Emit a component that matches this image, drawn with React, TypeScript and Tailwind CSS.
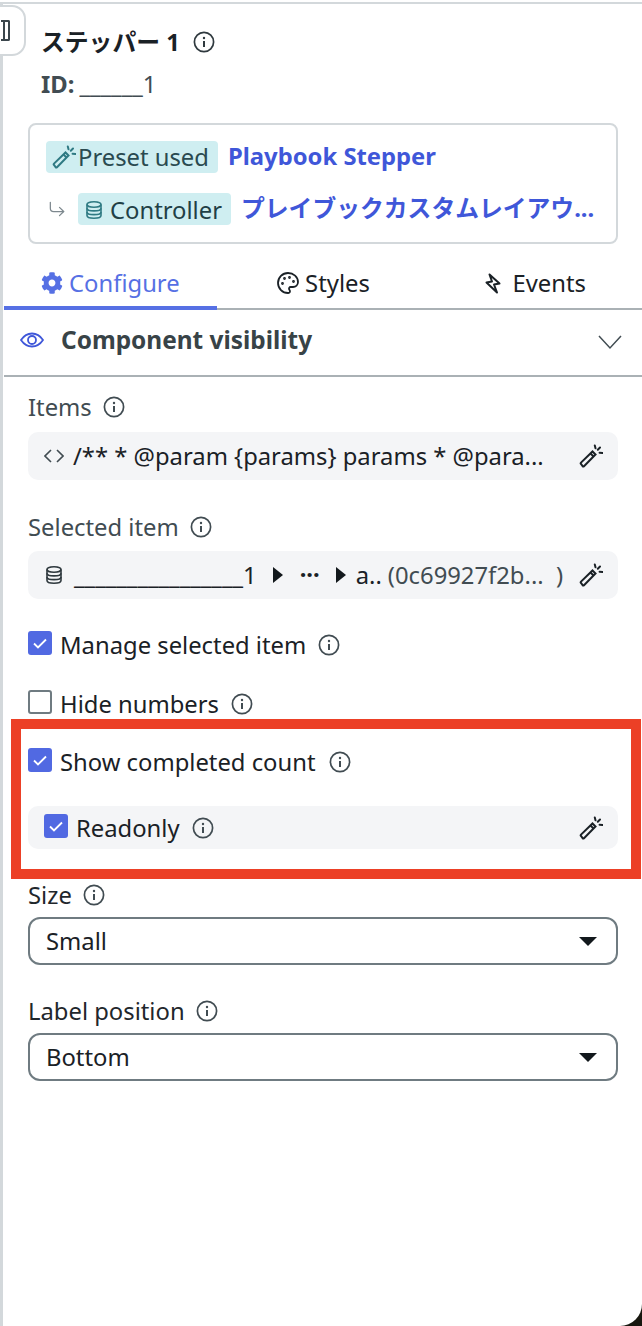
import React from "react";
import { CornerDownRight, Palette } from "lucide-react";
import { FaCog } from "react-icons/fa";

const Info = ({ className = "" }: { className?: string }) => (
  <svg viewBox="0 0 22 22" className={`h-[22px] w-[22px] shrink-0 ${className}`} fill="none" stroke="currentColor">
    <circle cx="11" cy="11" r="9.6" strokeWidth="1.7" />
    <circle cx="11" cy="7" r="1.2" fill="currentColor" stroke="none" />
    <path d="M11 10v6" strokeWidth="2" />
  </svg>
);

const Wand = ({ className = "" }: { className?: string }) => (
  <svg viewBox="0 0 24 24" className={`h-6 w-6 shrink-0 ${className}`} fill="none" stroke="currentColor" strokeWidth="2">
    <path d="M2 18.600 13.500 7.500l3 3L5 22.200a1 1 0 0 1-1.400 0L2 20a1 1 0 0 1 0-1.400Z" />
    <path d="M11.500 9.500l3 3" />
    <path d="M15.800 1.500l.7 2.800M21 3.500l-2.200 2.200M23.500 9l-2.900-.3" strokeLinecap="round" />
  </svg>
);

const Db = ({ className = "" }: { className?: string }) => (
  <svg viewBox="0 0 16 18" className={`h-[18px] w-4 shrink-0 ${className}`} fill="none" stroke="currentColor" strokeWidth="1.600">
    <ellipse cx="8" cy="3.500" rx="7" ry="2.700" />
    <path d="M1 3.500v11c0 1.500 3.100 2.700 7 2.700s7-1.200 7-2.700v-11" />
    <path d="M1 7.200c0 1.500 3.100 2.700 7 2.700s7-1.200 7-2.700M1 10.900c0 1.500 3.100 2.700 7 2.700s7-1.200 7-2.700" />
  </svg>
);

const Check = ({ checked, className = "" }: { checked: boolean; className?: string }) =>
  checked ? (
    <span className={`flex h-6 w-6 shrink-0 items-center justify-center rounded-[3px] bg-[#5169e2] ${className}`}>
      <svg viewBox="0 0 24 24" className="h-6 w-6" fill="none" stroke="#fff" strokeWidth="1.8">
        <path d="M6 12.500l4 4 8-8" />
      </svg>
    </span>
  ) : (
    <span className={`h-6 w-6 shrink-0 rounded-[3px] border-2 border-[#6f7b81] bg-white ${className}`} />
  );

const Field = ({ label, mt, gap, children }: { label: string; mt: string; gap: string; children: React.ReactNode }) => (
  <div className={mt}>
    <div className="flex h-[22px] items-center gap-[11.5px] text-[#414c52]">
      <span>{label}</span>
      <Info />
    </div>
    <div className={`${gap} flex h-12 items-center justify-between rounded-[10px] bg-[#f4f5f7] pl-4 pr-[15px] text-[#1a2126]`}>
      {children}
    </div>
  </div>
);

const Select = ({ label, value, mt }: { label: string; value: string; mt: string }) => (
  <div className={mt}>
    <div className="flex h-[22px] items-center gap-[11px] text-[#1f272c]">
      <span>{label}</span>
      <Info className="text-[#414c52]" />
    </div>
    <div className="mt-[11px] flex h-12 items-center justify-between rounded-[12px] border-2 border-[#6f7b81] pl-4 pr-[19px] text-[#1a2126]">
      <span>{value}</span>
      <span className="h-0 w-0 border-x-[9px] border-t-[9px] border-x-transparent border-t-[#12181c]" />
    </div>
  </div>
);

const Arrow = ({ className = "" }: { className?: string }) => (
  <span className={`h-0 w-0 shrink-0 border-y-[8px] border-l-[10px] border-y-transparent border-l-[#12181c] ${className}`} />
);

export default function App() {
  return (
    <div className="h-[1326px] w-[642px] overflow-hidden bg-[#17170f]">
      <div
        className="relative h-[1326px] w-[642px] overflow-hidden rounded-br-[22px] bg-white text-[23.8px] leading-[30px] text-[#1a2126]"
        style={{ fontFamily: '"Noto Sans", "Noto Sans CJK JP", sans-serif' }}
      >
        <div className="absolute inset-x-0 top-[2px] h-[2px] bg-[#d3d8db]" />
        <div className="absolute bottom-0 left-0 top-[2px] w-[3px] bg-[#d3d8db]" />
        <div className="absolute left-[-20px] top-[5px] flex h-[51px] w-[46px] items-center justify-end rounded-[14px] border-2 border-[#d3d8db] bg-white pr-[14px]">
          <span className="h-[21px] w-[9px] rounded-r-[2px] border-2 border-l-0 border-[#3b464c] pl-[2px]">
            <span className="block h-full w-[2px] bg-[#3b464c]" />
          </span>
        </div>

        <div className="pl-[28px] pr-[24px] pt-[26px]">
          <div className="flex h-[32px] items-center gap-[13px] pl-[13px]">
            <span className="font-bold text-[#1a2126]">ステッパー 1</span>
            <Info className="text-[#2f393e]" />
          </div>
          <div className="mt-[11px] flex h-[30px] items-center gap-[5px] pl-[13px] text-[#414c52]">
            <span className="font-bold">ID:</span>
            <span>______1</span>
          </div>

          <div className="mt-[24px] flex h-[121px] flex-col gap-[20px] rounded-[8px] border-2 border-[#d3d8db] pl-[16px] pr-[20px] pt-[16px]">
            <div className="flex h-[32px] items-center gap-[10px]">
              <span className="flex h-[32px] items-center gap-[2px] rounded-[4px] bg-[#cfeef1] pl-[6px] pr-[9px] text-[#2a4a50]">
                <Wand className="h-[24px] w-[24px] text-[#2f7a83]" />
                Preset used
              </span>
              <span className="mb-[2px] font-bold text-[#3f57d9]">Playbook Stepper</span>
            </div>
            <div className="flex h-[32px] items-center gap-[11px]">
              <CornerDownRight className="ml-[1px] h-[20px] w-[20px] shrink-0 text-[#7d888e]" strokeWidth={1.5} />
              <span className="flex h-[32px] shrink-0 items-center gap-[8px] rounded-[4px] bg-[#cfeef1] pl-[8px] pr-[9px] text-[#1f4046]">
                <Db className="mt-[2px] text-[#2f7a83]" />
                <span className="mt-[2px]">Controller</span>
              </span>
              <span className="mb-[2px] ml-[-1px] whitespace-nowrap font-bold text-[#3f57d9]">プレイブックカスタムレイアウ...</span>
            </div>
          </div>
        </div>

        <div className="ml-[4px] mt-[16px] grid h-[50px] grid-cols-3 border-b-2 border-[#aab1b5]">
          <div className="relative flex items-center justify-center gap-[6px] pb-[2px] text-[#5670e4]">
            <FaCog className="h-[22px] w-[22px]" />
            Configure
            <span className="absolute inset-x-0 bottom-[-2px] h-[4px] bg-[#5670e4]" />
          </div>
          <div className="flex items-center justify-center gap-[5px] pb-[2px]">
            <Palette className="h-[24px] w-[24px]" strokeWidth={1.8} />
            Styles
          </div>
          <div className="flex items-center justify-center gap-[11px] pb-[2px]">
            <svg viewBox="0 0 16 21" className="h-[21px] w-[16px]" fill="none" stroke="#1a2126" strokeWidth="2" strokeLinejoin="round">
              <path d="M4.500 1.500 14.500 10.500 9 11.500 12 19.500 1.500 9.500 7 8.500Z" />
            </svg>
            Events
          </div>
        </div>

        <div className="ml-[4px] flex h-[67px] items-center justify-between border-b-2 border-[#aab1b5] pb-[6px] pl-[16px] pr-[20px]">
          <div className="flex items-center gap-[17px]">
            <svg viewBox="0 0 24 16" className="h-[16px] w-[24px]" fill="none" stroke="#3f57d9" strokeWidth="1.8">
              <path d="M1 8c3-4.500 6.500-6.500 11-6.500S20 3.500 23 8c-3 4.500-6.500 6.500-11 6.500S4 12.500 1 8Z" />
              <circle cx="12" cy="8" r="4" />
            </svg>
            <span className="text-[24.4px] font-bold text-[#384347]">Component visibility</span>
          </div>
          <svg viewBox="0 0 24 15" className="mt-[5px] h-[15px] w-[24px]" fill="none" stroke="#414c52" strokeWidth="1.5">
            <path d="M1 1l11 12L23 1" />
          </svg>
        </div>

        <div className="pl-[28px] pr-[24px]">
          <Field label="Items" mt="mt-[19px]" gap="mt-[14px]">
            <div className="flex min-w-0 items-center gap-[9px]">
              <svg viewBox="0 0 20 14" className="h-[14px] w-[20px] shrink-0" fill="none" stroke="#414c52" strokeWidth="1.6">
                <path d="M7 1 1 7l6 6M13 1l6 6-6 6" />
              </svg>
              <span className="whitespace-nowrap">/** * @param {"{params}"} params * @para...</span>
            </div>
            <Wand />
          </Field>

          <Field label="Selected item" mt="mt-[36px]" gap="mt-[13px]">
            <div className="flex min-w-0 items-center">
              <Db className="ml-[2px] mr-[12px] text-[#2f393e]" />
              <span className="whitespace-nowrap">________________1</span>
              <Arrow className="ml-[16px] mr-[17px]" />
              <span className="font-bold leading-none">···</span>
              <Arrow className="ml-[16px] mr-[10px]" />
              <span className="whitespace-nowrap">a..</span>
              <span className="ml-[6px] whitespace-nowrap text-[#414c52]">(0c69927f2b...&nbsp;&nbsp;)</span>
            </div>
            <Wand />
          </Field>

          <div className="mt-[32px] flex h-6 items-center gap-[8px]">
            <Check checked />
            <span className="mt-[3px]">Manage selected item</span>
            <Info className="ml-[4px] mt-[4px] text-[#414c52]" />
          </div>
          <div className="mt-[35px] flex h-6 items-center gap-[8px]">
            <Check checked={false} />
            <span className="mt-[3px]">Hide numbers</span>
            <Info className="ml-[4px] mt-[4px] text-[#414c52]" />
          </div>
          <div className="mt-[34px] flex h-6 items-center gap-[8px]">
            <Check checked />
            <span className="mt-[3px]">Show completed count</span>
            <Info className="ml-[5px] mt-[4px] text-[#414c52]" />
          </div>
          <div className="mt-[34px] flex h-[43px] items-center justify-between rounded-[10px] bg-[#f4f5f7] pl-4 pr-[15px]">
            <div className="flex items-center gap-[8px]">
              <Check checked className="mb-[3px]" />
              <span>Readonly</span>
              <Info className="ml-[4px] text-[#414c52]" />
            </div>
            <Wand />
          </div>

          <Select label="Size" value="Small" mt="mt-[35px]" />
          <Select label="Label position" value="Bottom" mt="mt-[35px]" />
        </div>

        <div className="pointer-events-none absolute left-[11px] top-[719px] h-[160px] w-[630px] border-[10px] border-[#ec4026]" />
      </div>
    </div>
  );
}
